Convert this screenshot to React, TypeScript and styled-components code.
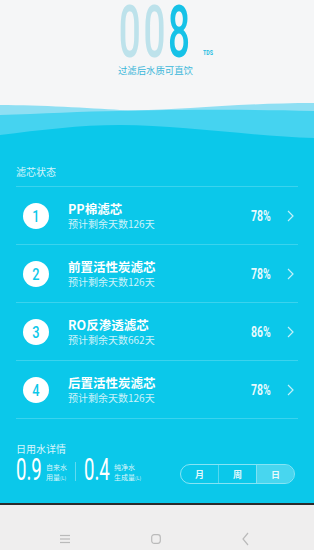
import styled, { createGlobalStyle } from "styled-components";

const CYAN = "#0bc8ea";

const GlobalStyle = createGlobalStyle`
  html, body { margin: 0; padding: 0; }
  body {
    width: 314px;
    height: 550px;
    overflow: hidden;
    background: #f5f6f7;
    font-family: "Noto Sans CJK SC", "Noto Sans", sans-serif;
  }
`;

const filters = [
  { n: 1, name: "PP棉滤芯", days: 126, pct: 78 },
  { n: 2, name: "前置活性炭滤芯", days: 126, pct: 78 },
  { n: 3, name: "RO反渗透滤芯", days: 662, pct: 86 },
  { n: 4, name: "后置活性炭滤芯", days: 126, pct: 78 },
];

export default function App() {
  return (
    <Screen>
      <GlobalStyle />
      <Header>
        <Readout>
          <Digits>
            <Narrow $x={0.53} $origin="center">
              <Dim>00</Dim>8
            </Narrow>
          </Digits>
          <Unit>
            <Narrow $x={0.75}>TDS</Narrow>
          </Unit>
        </Readout>
        <Caption>过滤后水质可直饮</Caption>
      </Header>

      <Wave viewBox="0 0 314 40" preserveAspectRatio="none">
        <path d="M0,5 C40,5 90,8 120,10 C170,12 230,3 314,3 V40 H0 Z" fill="#8edff3" />
        <path d="M0,15 C40,14 85,11 120,11 C170,10 240,9 314,11 V40 H0 Z" fill="#45d3f0" />
        <path d="M0,35 C40,30 80,25 120,25 C180,25 250,36 314,38 V40 H0 Z" fill={CYAN} />
      </Wave>

      <Main>
        <SectionTitle>滤芯状态</SectionTitle>
        <List>
          {filters.map((f) => (
            <Row key={f.n}>
              <Badge>
                <Narrow $x={0.75} $origin="center">{f.n}</Narrow>
              </Badge>
              <Info>
                <Name>{f.name}</Name>
                <Remain>预计剩余天数{f.days}天</Remain>
              </Info>
              <Percent>
                <Narrow $x={0.7}>{f.pct}%</Narrow>
              </Percent>
              <Chevron viewBox="0 0 7 12">
                <polyline points="1,1 6,6 1,11" />
              </Chevron>
            </Row>
          ))}
        </List>

        <SectionTitle $top={23}>日用水详情</SectionTitle>
        <UsageRow>
          <StatValue>
            <Narrow $x={0.6}>0.9</Narrow>
          </StatValue>
          <StatLabel>
            自来水
            <br />
            用量<small>(L)</small>
          </StatLabel>
          <VDivider />
          <StatValue>
            <Narrow $x={0.6}>0.4</Narrow>
          </StatValue>
          <StatLabel>
            纯净水
            <br />
            生成量<small>(L)</small>
          </StatLabel>
          <Segmented>
            <Segment>月</Segment>
            <Segment>周</Segment>
            <Segment $active>日</Segment>
          </Segmented>
        </UsageRow>
      </Main>

      <NavBar>
        <NavIcon viewBox="0 0 10 10">
          <line x1="0" y1="1.5" x2="10" y2="1.5" />
          <line x1="0" y1="5" x2="10" y2="5" />
          <line x1="0" y1="8.5" x2="10" y2="8.5" />
        </NavIcon>
        <NavIcon viewBox="0 0 10 10">
          <rect x="0.7" y="0.7" width="8.6" height="8.6" rx="2.5" />
        </NavIcon>
        <NavIcon viewBox="0 0 7 14" $w={7} $h={14}>
          <polyline points="6,1 1,7 6,13" />
        </NavIcon>
      </NavBar>
    </Screen>
  );
}

const Screen = styled.div`
  display: flex;
  flex-direction: column;
  width: 314px;
  height: 550px;
`;

const Narrow = styled.span<{ $x: number; $origin?: string }>`
  display: inline-block;
  white-space: nowrap;
  transform: scaleX(${(p) => p.$x});
  transform-origin: ${(p) => p.$origin ?? "left"} center;
`;

const Header = styled.div`
  height: 100px;
  box-sizing: border-box;
  padding-top: 6px;
  background: #f5f6f7;
`;

const Readout = styled.div`
  display: flex;
  align-items: flex-end;
  justify-content: center;
  padding-left: 20px;
`;

const Digits = styled.div`
  display: flex;
  justify-content: center;
  width: 75px;
  height: 52px;
  font-family: Roboto, sans-serif;
  font-weight: 500;
  font-size: 73px;
  line-height: 52px;
  letter-spacing: 5px;
  color: #16c2e7;
`;

const Dim = styled.span`
  color: #bde2eb;
`;

const Unit = styled.div`
  width: 13px;
  margin-left: 9px;
  margin-bottom: 1px;
  font-family: Roboto, sans-serif;
  font-weight: 700;
  font-size: 7px;
  line-height: 8px;
  color: #25bde2;
`;

const Caption = styled.div`
  margin-top: 6px;
  padding-right: 3px;
  text-align: center;
  font-size: 9.4px;
  line-height: 12px;
  color: #3ab7da;
`;

const Wave = styled.svg`
  display: block;
  width: 314px;
  height: 40px;
  background: #f5f6f7;
`;

const Main = styled.div`
  flex: 1;
  padding: 25px 16px 0;
  background: ${CYAN};
  color: #fff;
`;

const SectionTitle = styled.div<{ $top?: number }>`
  margin-top: ${(p) => p.$top ?? 0}px;
  font-size: 10px;
  line-height: 14px;
  color: rgba(255, 255, 255, 0.85);
`;

const List = styled.div`
  margin-top: 7px;
  border-bottom: 1px solid rgba(255, 255, 255, 0.2);
`;

const Row = styled.div`
  display: flex;
  align-items: center;
  height: 57px;
  padding: 0 4px 0 7px;
  border-top: 1px solid rgba(255, 255, 255, 0.2);
`;

const Badge = styled.div`
  display: flex;
  align-items: center;
  justify-content: center;
  width: 26px;
  height: 26px;
  margin-right: 19px;
  border-radius: 50%;
  background: #fff;
  color: ${CYAN};
  font-family: Roboto, sans-serif;
  font-weight: 500;
  font-size: 17px;
`;

const Info = styled.div`
  flex: 1;
  display: flex;
  flex-direction: column;
`;

const Name = styled.div`
  font-size: 12.5px;
  font-weight: 700;
  line-height: 16px;
`;

const Remain = styled.div`
  font-size: 10px;
  line-height: 14px;
  color: rgba(255, 255, 255, 0.8);
`;

const Percent = styled.div`
  width: 22px;
  margin-right: 14px;
  font-family: Roboto, sans-serif;
  font-weight: 700;
  font-size: 15px;
  color: rgba(255, 255, 255, 0.92);
`;

const Chevron = styled.svg`
  width: 7px;
  height: 12px;
  fill: none;
  stroke: rgba(255, 255, 255, 0.75);
  stroke-width: 1.2;
`;

const UsageRow = styled.div`
  display: flex;
  align-items: center;
`;

const StatValue = styled.div`
  width: 26px;
  height: 26px;
  font-family: Roboto, sans-serif;
  font-weight: 400;
  font-size: 31px;
  line-height: 26px;
`;

const StatLabel = styled.div`
  margin-left: 4px;
  margin-top: 5px;
  font-size: 7px;
  line-height: 10px;
  color: rgba(255, 255, 255, 0.85);
  white-space: nowrap;

  small {
    font-size: 5px;
  }
`;

const VDivider = styled.div`
  width: 1px;
  height: 19px;
  margin: 2px 8px 0;
  background: rgba(255, 255, 255, 0.35);
`;

const Segmented = styled.div`
  display: flex;
  width: 115px;
  height: 20px;
  margin: 8px 3px 0 auto;
  box-sizing: border-box;
  border: 1px solid rgba(255, 255, 255, 0.5);
  border-radius: 11px;
  overflow: hidden;
`;

const Segment = styled.div<{ $active?: boolean }>`
  flex: 1;
  display: flex;
  align-items: center;
  justify-content: center;
  font-size: 9px;
  font-weight: 700;
  color: rgba(255, 255, 255, 0.9);
  background: ${(p) => (p.$active ? "rgba(255, 255, 255, 0.25)" : "transparent")};

  & + & {
    border-left: 1px solid rgba(255, 255, 255, 0.3);
  }
`;

const NavBar = styled.div`
  height: 47px;
  box-sizing: border-box;
  display: flex;
  align-items: center;
  justify-content: space-between;
  padding: 22px 65px 0 60px;
  border-top: 2px solid #2b2b2b;
  background: #efeeee;
`;

const NavIcon = styled.svg<{ $w?: number; $h?: number }>`
  width: ${(p) => p.$w ?? 10}px;
  height: ${(p) => p.$h ?? 10}px;
  fill: none;
  stroke: #bababa;
  stroke-width: 1.2;
`;
